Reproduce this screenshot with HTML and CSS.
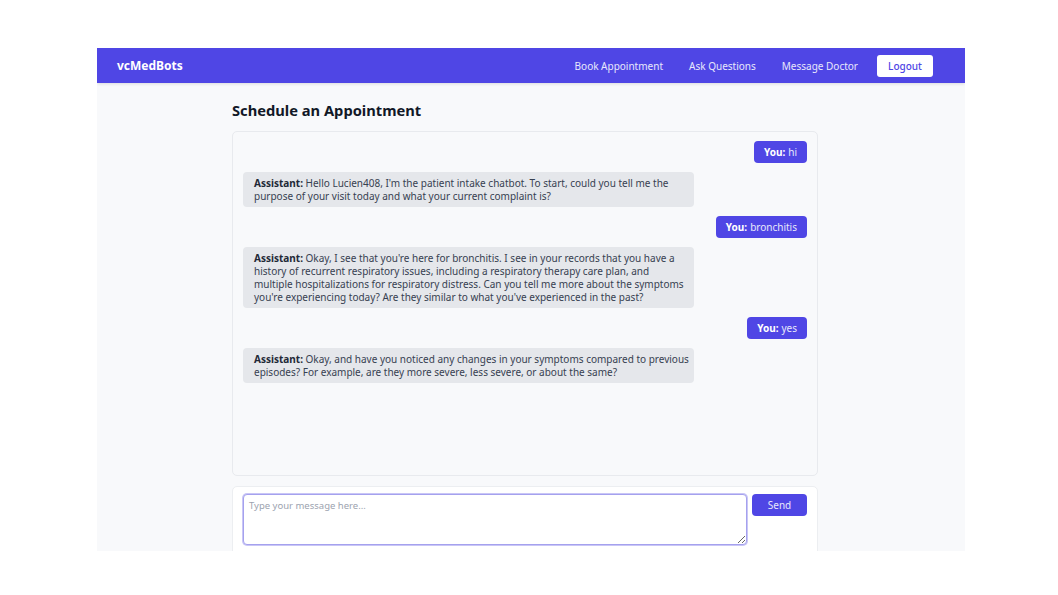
FILE: index.html
```html
<!DOCTYPE html>
<html>
<head>
<meta charset="utf-8">
<link rel="stylesheet" href="styles.css">
</head>
<body>
<div class="app">
  <nav class="nav">
    <div class="brand">vcMedBots</div>
    <div class="links">
      <a class="link">Book Appointment</a>
      <a class="link">Ask Questions</a>
      <a class="link">Message Doctor</a>
      <button class="logout">Logout</button>
    </div>
  </nav>
  <main class="main">
    <h1 class="title">Schedule an Appointment</h1>
    <div class="chat">
      <div class="msg user"><b>You:</b> hi</div>
      <div class="msg bot"><b>Assistant:</b> Hello Lucien408, I'm the patient intake chatbot. To start, could you tell me the purpose of your visit today and what your current complaint is?</div>
      <div class="msg user"><b>You:</b> bronchitis</div>
      <div class="msg bot"><b>Assistant:</b> Okay, I see that you're here for bronchitis. I see in your records that you have a history of recurrent respiratory issues, including a respiratory therapy care plan, and multiple hospitalizations for respiratory distress. Can you tell me more about the symptoms you're experiencing today? Are they similar to what you've experienced in the past?</div>
      <div class="msg user"><b>You:</b> yes</div>
      <div class="msg bot"><b>Assistant:</b> Okay, and have you noticed any changes in your symptoms compared to previous episodes? For example, are they more severe, less severe, or about the same?</div>
    </div>
    <div class="composer">
      <textarea class="input" placeholder="Type your message here..."></textarea>
      <button class="send">Send</button>
    </div>
  </main>
</div>
</body>
</html>
```
FILE: styles.css
```css
* { box-sizing: border-box; }
body {
  margin: 0;
  background: #ffffff;
  font-family: "Noto Sans", "Open Sans", sans-serif;
}
.app {
  margin: 48px 93px 0 97px;
  width: 868px;
  height: 503px;
  overflow: hidden;
  background: #f8f9fb;
}
.nav {
  height: 35px;
  background: #4f46e5;
  display: flex;
  align-items: center;
  justify-content: space-between;
  padding: 0 32px 0 20px;
  box-shadow: 0 1px 3px rgba(0,0,0,0.12);
}
.brand {
  color: #ffffff;
  font-weight: 700;
  font-size: 12px;
}
.links {
  display: flex;
  align-items: center;
  gap: 26px;
}
.link {
  color: #e8e8fb;
  font-size: 10px;
}
.logout {
  margin-left: -7px;
  background: #ffffff;
  color: #4f46e5;
  border: none;
  border-radius: 3px;
  height: 22px;
  width: 56px;
  font-family: inherit;
  font-size: 10px;
  font-weight: 500;
  padding: 0;
}
.main {
  margin-left: 135px;
  width: 586px;
}
.title {
  margin: 18px 0 12px;
  font-size: 14.7px;
  font-weight: 700;
  color: #111827;
  line-height: 18px;
}
.chat {
  height: 345px;
  border: 1px solid #e8eaee;
  border-radius: 5px;
  background: #f8f9fb;
  padding: 9px 10px;
  display: flex;
  flex-direction: column;
  gap: 9px;
}
.msg {
  font-size: 10px;
  line-height: 13px;
  border-radius: 4px;
}
.msg b { font-weight: 700; }
.user {
  align-self: flex-end;
  background: #4f46e5;
  color: #e8e8fb;
  height: 22px;
  padding: 0 10px;
  display: flex;
  align-items: center;
  gap: 3px;
}
.user b { color: #ffffff; }
.bot {
  align-self: flex-start;
  width: 451px;
  background: #e5e7eb;
  color: #374151;
  padding: 5px 5px 4px 11px;
}
.bot b { color: #1f2937; }
.composer {
  margin-top: 10px;
  background: #ffffff;
  border: 1px solid #eceef1;
  border-radius: 5px;
  padding: 7px 10px 10px 10px;
  display: flex;
  align-items: flex-start;
  gap: 5px;
  height: 80px;
}
.input {
  width: 504px;
  height: 51px;
  border: 1px solid #a5a1ee;
  border-radius: 4px;
  box-shadow: 0 0 0 1px #c9c6f6;
  padding: 4px 5px;
  font-family: inherit;
  font-size: 9.5px;
  resize: vertical;
  outline: none;
}
.input::placeholder { color: #9ca3af; }
.send {
  width: 55px;
  height: 22px;
  border: none;
  border-radius: 4px;
  background: #4f46e5;
  color: #e8e8fb;
  font-family: inherit;
  font-size: 10px;
  padding: 0;
}
```
